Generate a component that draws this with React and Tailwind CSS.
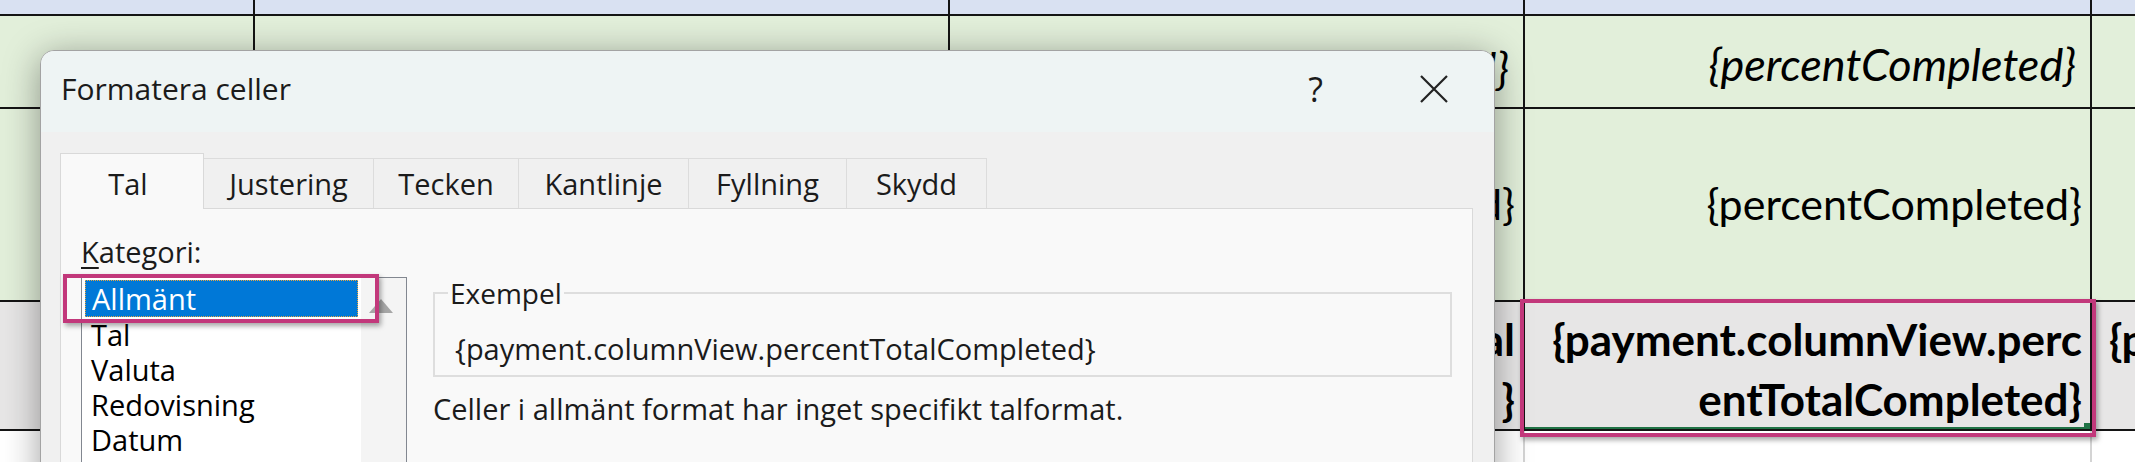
import React from "react";

const greenRow = "bg-[#e2efda]";

function Cell({ bg, right = true, bottom = true, className = "", children }) {
  return (
    <div
      className={`${bg} ${right ? "border-r-2" : ""} ${bottom ? "border-b-2" : ""} border-[#141414] overflow-hidden flex ${className}`}
    >
      {children}
    </div>
  );
}

function Sheet() {
  const rowOne = "items-center justify-end whitespace-nowrap italic text-[45px]";
  const rowTwo = "items-center justify-end whitespace-nowrap text-[43px]";
  const rowThree = "items-end justify-end font-bold text-[44px] leading-[60px] text-right";

  return (
    <div className="grid h-full grid-cols-[255px_695px_575px_567px_1fr] grid-rows-[16px_93px_193px_129px_1fr] font-['Lato',sans-serif] text-black">
      {/* header row */}
      <Cell bg="bg-[#d9e1f2]" />
      <Cell bg="bg-[#d9e1f2]" />
      <Cell bg="bg-[#d9e1f2]" />
      <Cell bg="bg-[#d9e1f2]" />
      <Cell bg="bg-[#d9e1f2]" right={false} />

      <Cell bg={greenRow} />
      <Cell bg={greenRow} className={`${rowOne} pt-[14px] pr-[14px]`}>
        <span>{"{payment.columnView.amountCompleted}"}</span>
      </Cell>
      <Cell bg={greenRow} className={`${rowOne} pt-[14px] pr-[14px]`}>
        <span>{"{payment.columnView.percentCompleted}"}</span>
      </Cell>
      <Cell bg={greenRow} className={`${rowOne} pt-[6px] pr-[14px]`}>
        <span>{"{percentCompleted}"}</span>
      </Cell>
      <Cell bg={greenRow} right={false} />

      <Cell bg={greenRow} />
      <Cell bg={greenRow} className={`${rowTwo} pr-[8px]`}>
        <span>{"{payment.columnView.amountCompleted}"}</span>
      </Cell>
      <Cell bg={greenRow} className={`${rowTwo} pr-[8px]`}>
        <span>{"{payment.columnView.percentCompleted}"}</span>
      </Cell>
      <Cell bg={greenRow} className={`${rowTwo} pr-[8px]`}>
        <span>{"{percentCompleted}"}</span>
      </Cell>
      <Cell bg={greenRow} right={false} />

      <Cell bg="bg-[#e7e6e6]" />
      <Cell bg="bg-[#e7e6e6]" className={`${rowThree} pr-[8px]`}>
        <div>
          <div>{"{payment.columnView.amountT"}</div>
          <div>{"otal}"}</div>
        </div>
      </Cell>
      <Cell bg="bg-[#e7e6e6]" className={`${rowThree} pr-[8px]`}>
        <div className="whitespace-nowrap">
          <div>{"{payment.columnView.amountTotal"}</div>
          <div>{"Sum }"}</div>
        </div>
      </Cell>
      <Cell bg="bg-[#e7e6e6]" className={`${rowThree} pr-[8px] relative`}>
        <div>
          <div>{"{payment.columnView.perc"}</div>
          <div>{"entTotalCompleted}"}</div>
        </div>
        <div className="absolute left-0 right-0 bottom-0 h-[2px] bg-[#217346]" />
        <div className="absolute right-0 bottom-0 w-[6px] h-[6px] bg-[#217346]" />
      </Cell>
      <Cell bg="bg-[#e7e6e6]" right={false} className="items-end font-bold text-[44px] leading-[60px] whitespace-nowrap pl-[17px]">
        <div>
          <div>{"{payment.columnView.perc"}</div>
          <div className="invisible">x</div>
        </div>
      </Cell>

      <Cell bg="bg-white" bottom={false} className="border-r border-[#d4d4d4]" />
      <Cell bg="bg-white" bottom={false} className="border-r border-[#d4d4d4]" />
      <Cell bg="bg-white" bottom={false} className="border-r border-[#d4d4d4]" />
      <Cell bg="bg-white" bottom={false} className="border-r border-[#d4d4d4]" />
      <Cell bg="bg-white" right={false} bottom={false} />
    </div>
  );
}

const tabs = [
  { label: "Justering", w: "w-[170px]" },
  { label: "Tecken", w: "w-[145px]" },
  { label: "Kantlinje", w: "w-[170px]" },
  { label: "Fyllning", w: "w-[158px]" },
  { label: "Skydd", w: "w-[140px]" },
];

const categories = ["Tal", "Valuta", "Redovisning", "Datum", "Tid"];

function Dialog() {
  return (
    <div className="absolute left-[40px] top-[50px] w-[1455px] h-[480px] rounded-t-[14px] border border-[#a3a3a3] bg-[#f0f0f0] shadow-[0_6px_36px_rgba(0,0,0,0.38)] overflow-hidden font-['Open_Sans',sans-serif] text-[#1b1b1b]">
      <div className="h-[81px] bg-[#eef4f4] flex items-center pl-[20px] pr-[46px] pb-[6px]">
        <span className="text-[30px] leading-[40px]">Formatera celler</span>
        <span className="ml-auto text-[34px] leading-[40px]">?</span>
        {/* close glyph */}
        <svg className="ml-[97px]" width="28" height="28" viewBox="0 0 28 28">
          <path d="M1 1 L27 27 M27 1 L1 27" stroke="#222" strokeWidth="2.2" fill="none" />
        </svg>
      </div>

      <div className="pt-[21px] pl-[19px] pr-[21px]">
        <div className="flex items-end">
          <div className="relative z-10 -mb-px w-[144px] h-[56px] pt-[4px] pr-[8px] bg-[#f9f9f9] border border-b-0 border-[#d9d9d9] flex items-center justify-center text-[29px] leading-[39px]">
            Tal
          </div>
          {tabs.map((t) => (
            <div
              key={t.label}
              className={`${t.w} h-[50px] bg-[#f0f0f0] border-t border-r border-[#dcdcdc] flex items-center justify-center text-[29px] leading-[39px]`}
            >
              {t.label}
            </div>
          ))}
        </div>

        <div className="h-[300px] bg-[#f9f9f9] border border-[#d9d9d9] flex pt-[23px] pl-[20px] pr-[20px]">
          <div className="w-[326px] flex flex-col">
            <div className="text-[29px] leading-[39px]">
              <span className="underline underline-offset-[4px]">K</span>ategori:
            </div>
            <div className="mt-[6px] h-[220px] bg-white border border-[#828790] flex">
              <div className="w-[279px] pt-[2px] text-[29px] text-black">
                <div className="mx-[3px] h-[37px] leading-[36px] pl-[6px] bg-[#0078d7] text-white border border-dotted border-[#e9a640]">
                  Allmänt
                </div>
                {categories.map((c) => (
                  <div key={c} className="h-[35px] leading-[35px] pl-[9px]">
                    {c}
                  </div>
                ))}
              </div>
              <div className="flex-1 bg-[#f4f4f4] pt-[21px] pl-[8px]">
                <svg width="24" height="14" viewBox="0 0 24 14">
                  <polygon points="12,0 24,14 0,14" fill="#a6a6a6" />
                </svg>
              </div>
            </div>
          </div>

          <div className="flex-1 ml-[26px] pt-[43px]">
            <fieldset className="border-2 border-[#dedede] m-0 p-0">
              <legend className="ml-[13px] px-[2px] text-[28px] leading-[36px]">Exempel</legend>
              <div className="pl-[20px] mt-[20px] mb-[8px] text-[29px] leading-[36px]">
                {"{payment.columnView.percentTotalCompleted}"}
              </div>
            </fieldset>
            <div className="mt-[14px] text-[29px] leading-[36px]">
              Celler i allmänt format har inget specifikt talformat.
            </div>
          </div>
        </div>
      </div>
    </div>
  );
}

export default function App() {
  return (
    <div className="relative w-[2135px] h-[462px] overflow-hidden bg-white">
      <Sheet />
      <Dialog />
      <div className="absolute left-[63px] top-[274px] w-[316px] h-[49px] border-4 border-[#c2387b] shadow-[2px_3px_5px_rgba(0,0,0,0.35)]" />
      <div className="absolute left-[1520px] top-[299px] w-[576px] h-[138px] border-4 border-[#c2387b] shadow-[2px_3px_5px_rgba(0,0,0,0.35)]" />
    </div>
  );
}
